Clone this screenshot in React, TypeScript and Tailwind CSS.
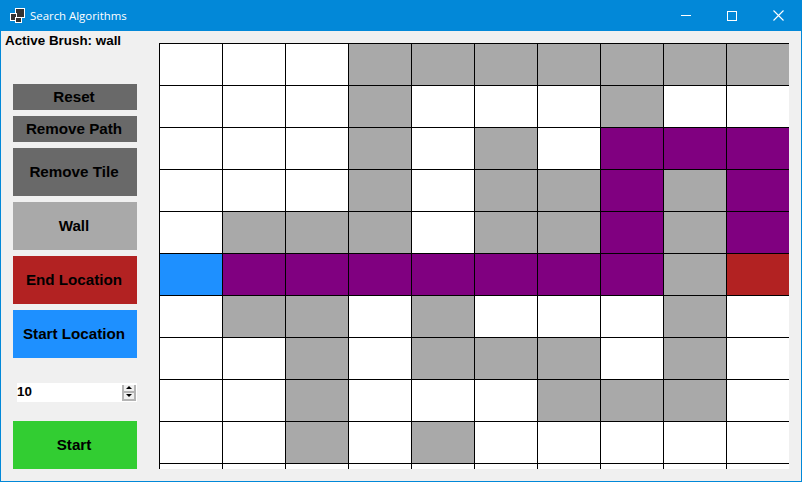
const rows = [
  "WWWGGGGGGG",
  "WWWGWWWGWW",
  "WWWGWGWPPP",
  "WWWGWGGPGP",
  "WGGGWGGPGP",
  "BPPPPPPPGR",
  "WGGWGWWWGW",
  "WWGWGGGWGW",
  "WWGWWWGGGW",
  "WWGWGWWWWW",
  "WWWWWWWWWW",
];

const cellClass: Record<string, string> = {
  W: "bg-white",
  G: "bg-[#a9a9a9]",
  P: "bg-[#800080]",
  B: "bg-[#1e90ff]",
  R: "bg-[#b22222]",
};

function Btn({ label, className }: { label: string; className: string }) {
  return (
    <div className={`flex w-[124px] items-center justify-center pr-[2px] pt-[1px] text-[15.2px] font-bold text-black ${className}`}>
      {label}
    </div>
  );
}

export default function App() {
  return (
    <div className="flex h-[482px] w-[802px] flex-col overflow-hidden border-x border-b border-[#0288d8] bg-[#f0f0f0] font-['Liberation_Sans',sans-serif]">
      <div className="flex h-[31px] shrink-0 items-center bg-[#0288d8] text-white">
        <svg width="18" height="16" viewBox="0 0 18 16" className="ml-[9px]">
          <rect x="5.5" y="0.5" width="9" height="9" fill="#333" stroke="#fff" />
          <rect x="0.5" y="5.5" width="6" height="7" fill="#333" stroke="#fff" />
          <rect x="5.5" y="9.5" width="6" height="5" fill="#333" stroke="#fff" />
        </svg>
        <span className="ml-[2px] font-['Open_Sans',sans-serif] text-[11.4px]">Search Algorithms</span>
        <div className="ml-auto flex h-full items-center">
          <div className="flex w-[46px] justify-center">
            <div className="h-px w-[10px] bg-white" />
          </div>
          <div className="flex w-[46px] justify-center">
            <div className="h-[10px] w-[10px] border border-white" />
          </div>
          <div className="flex w-[46px] justify-center">
            <svg width="11" height="11" viewBox="0 0 11 11" stroke="#fff" strokeWidth="1.1">
              <path d="M0.5 0.5L10.5 10.5M10.5 0.5L0.5 10.5" />
            </svg>
          </div>
        </div>
      </div>
      <div className="flex min-h-0 flex-1">
        <div className="relative w-[158px] shrink-0">
          <div className="pl-[4px] pt-[2px] text-[13.4px] font-bold leading-[15px] text-black">Active Brush: wall</div>
          <div className="ml-[12px] mt-[36px] flex flex-col gap-[6px]">
            <Btn label="Reset" className="h-[26px] bg-[#696969]" />
            <Btn label="Remove Path" className="h-[26px] bg-[#696969]" />
            <Btn label="Remove Tile" className="h-[48px] bg-[#696969]" />
            <Btn label="Wall" className="h-[48px] bg-[#a9a9a9]" />
            <Btn label="End Location" className="h-[48px] bg-[#b22222]" />
            <Btn label="Start Location" className="h-[48px] bg-[#1e90ff]" />
          </div>
          <div className="ml-[16px] mt-[25px] flex h-[19px] w-[120px] items-center bg-white pr-[1px]">
            <span className="flex-1 text-[13.4px] font-bold text-black">10</span>
            <div className="flex h-[16px] w-[14px] flex-col border-2 border-t-0 border-[#b4b4b4] bg-[#f0f0f0]">
              <div className="flex flex-1 items-center justify-center">
                <div className="h-0 w-0 border-x-[3px] border-b-[3px] border-x-transparent border-b-black" />
              </div>
              <div className="h-[2px] bg-[#b4b4b4]" />
              <div className="flex flex-1 items-center justify-center">
                <div className="h-0 w-0 border-x-[3px] border-t-[3px] border-x-transparent border-t-black" />
              </div>
            </div>
          </div>
          <div className="ml-[12px] mt-[19px]">
            <Btn label="Start" className="h-[48px] bg-[#32cd32]" />
          </div>
        </div>
        <div className="mt-[12px] grid h-[426px] w-[630px] grid-cols-[repeat(10,63px)] auto-rows-[42px] overflow-hidden">
          {rows.flatMap((row, r) =>
            row.split("").map((c, i) => (
              <div key={`${r}-${i}`} className={`border-l border-t border-black ${cellClass[c]}`} />
            ))
          )}
        </div>
      </div>
    </div>
  );
}
